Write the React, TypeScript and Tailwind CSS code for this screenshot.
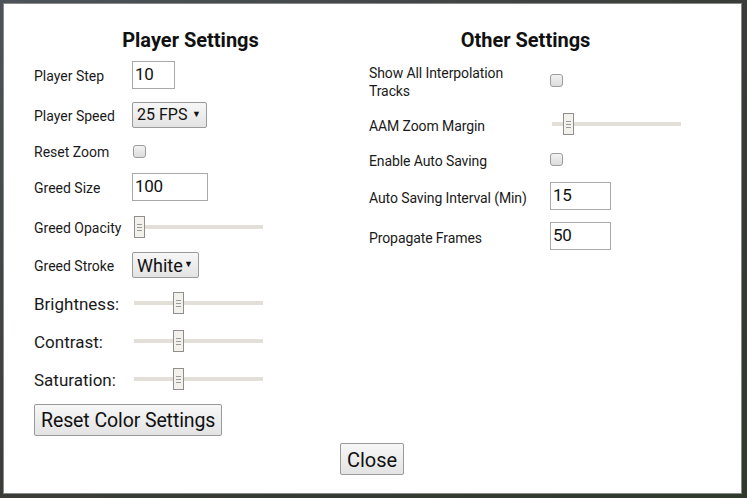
import React from "react";

const font = { fontFamily: "Roboto, 'Noto Sans', sans-serif" };

function Slider({ pos }: { pos: number }) {
  // pos = left offset of thumb in px within a 129px track
  return (
    <div className="relative h-[22px] w-[129px]">
      <div className="absolute left-0 right-0 top-[9px] h-[4px] bg-[#e2ded8]" />
      <div
        className="absolute top-0 flex h-[22px] w-[11px] flex-col items-center justify-center gap-[2px] border border-[#8e8e8e] bg-[#f3f1ec]"
        style={{ left: pos }}
      >
        <span className="h-px w-[5px] bg-[#9a9a9a]" />
        <span className="h-px w-[5px] bg-[#9a9a9a]" />
        <span className="h-px w-[5px] bg-[#9a9a9a]" />
      </div>
    </div>
  );
}

function Check() {
  return (
    <div className="h-[13px] w-[13px] rounded-[3px] border border-[#9c9c9c] bg-gradient-to-b from-[#f2f2f2] to-[#dcdcdc]" />
  );
}

function TextBox({ value, width }: { value: string; width: string }) {
  return (
    <div
      className={`flex h-[28px] items-center border border-[#a9a9a9] bg-white pl-[2px] text-[17px] tracking-[-0.3px] text-[#111] ${width}`}
    >
      {value}
    </div>
  );
}

function Select({ value, width, size }: { value: string; width: string; size: string }) {
  return (
    <div
      className={`flex h-[26px] items-center justify-between rounded-[2px] border border-[#9a9a9a] bg-gradient-to-b from-[#f7f7f7] to-[#e3e3e3] pl-[4px] pr-[5px] text-[#111] ${width} ${size}`}
    >
      <span>{value}</span>
      <span className="text-[9px]">▼</span>
    </div>
  );
}

function Row({ h, label, big, children }: { h: string; label: React.ReactNode; big?: boolean; children: React.ReactNode }) {
  return (
    <div className={`flex items-center ${h}`}>
      <div className={`w-[98px] shrink-0 pt-[3px] ${big ? "text-[17px]" : "text-[14px]"} text-[#1a1a1a]`}>{label}</div>
      {children}
    </div>
  );
}

function RRow({ h, label, children }: { h: string; label: React.ReactNode; children: React.ReactNode }) {
  return (
    <div className={`flex items-center ${h}`}>
      <div className="w-[181px] shrink-0 pt-[3px] text-[14px] leading-[18px] tracking-[-0.1px] text-[#1a1a1a]">{label}</div>
      {children}
    </div>
  );
}

export default function App() {
  return (
    <div
      className="h-[498px] w-[747px] overflow-hidden bg-gradient-to-br from-[#4d5358] via-[#3a3c38] to-[#2f3a2c] pl-[3px] pt-[3px]"
      style={font}
    >
      <div className="h-[491px] w-[739px] border border-[#8a8a8a] bg-white">
        <div className="flex pl-[19px] pt-[19px]">
          <div className="w-[335px] pl-[11px]">
            <h2 className="h-[32px] pr-[11px] pt-[1px] text-center text-[20px] font-bold leading-[32px] text-[#111]">
              Player Settings
            </h2>
            <Row h="h-[40px]" label="Player Step">
              <TextBox value="10" width="w-[43px]" />
            </Row>
            <Row h="h-[40px]" label="Player Speed">
              <Select value="25 FPS" width="w-[75px]" size="text-[16px]" />
            </Row>
            <Row h="h-[32px]" label="Reset Zoom">
              <div className="pl-[1px]">
                <Check />
              </div>
            </Row>
            <Row h="h-[40px]" label="Greed Size">
              <TextBox value="100" width="w-[76px]" />
            </Row>
            <Row h="h-[40px]" label="Greed Opacity">
              <div className="pl-[2px]">
                <Slider pos={0} />
              </div>
            </Row>
            <Row h="h-[36px]" label="Greed Stroke">
              <Select value="White" width="w-[67px]" size="text-[18px]" />
            </Row>
            <Row h="h-[40px]" big label="Brightness:">
              <div className="pl-[2px]">
                <Slider pos={39} />
              </div>
            </Row>
            <Row h="h-[36px]" big label="Contrast:">
              <div className="pl-[2px]">
                <Slider pos={39} />
              </div>
            </Row>
            <Row h="h-[40px]" big label="Saturation:">
              <div className="pl-[2px]">
                <Slider pos={39} />
              </div>
            </Row>
            <button className="mt-[5px] h-[32px] rounded-[2px] border border-[#9a9a9a] bg-gradient-to-b from-[#f7f7f7] to-[#e3e3e3] px-[6px] pt-[1px] text-[19.5px] tracking-[-0.1px] text-[#111]">
              Reset Color Settings
            </button>
          </div>
          <div className="w-[335px] pl-[11px]">
            <h2 className="h-[32px] pr-[11px] pt-[1px] text-center text-[20px] font-bold leading-[32px] text-[#111]">
              Other Settings
            </h2>
            <RRow h="h-[50px]" label={<span className="block max-w-[150px]">Show All Interpolation Tracks</span>}>
              <Check />
            </RRow>
            <RRow h="h-[38px]" label="AAM Zoom Margin">
              <div className="pl-[2px]">
                <Slider pos={11} />
              </div>
            </RRow>
            <RRow h="h-[32px]" label="Enable Auto Saving">
              <Check />
            </RRow>
            <RRow h="h-[42px]" label="Auto Saving Interval (Min)">
              <TextBox value="15" width="w-[61px]" />
            </RRow>
            <RRow h="h-[38px]" label="Propagate Frames">
              <TextBox value="50" width="w-[61px]" />
            </RRow>
          </div>
        </div>
        <div className="mt-[7px] flex justify-center pr-[1px]">
          <button className="h-[32px] rounded-[2px] border border-[#9a9a9a] bg-gradient-to-b from-[#f7f7f7] to-[#e3e3e3] px-[6px] pt-[1px] text-[20px] text-[#111]">
            Close
          </button>
        </div>
      </div>
    </div>
  );
}
